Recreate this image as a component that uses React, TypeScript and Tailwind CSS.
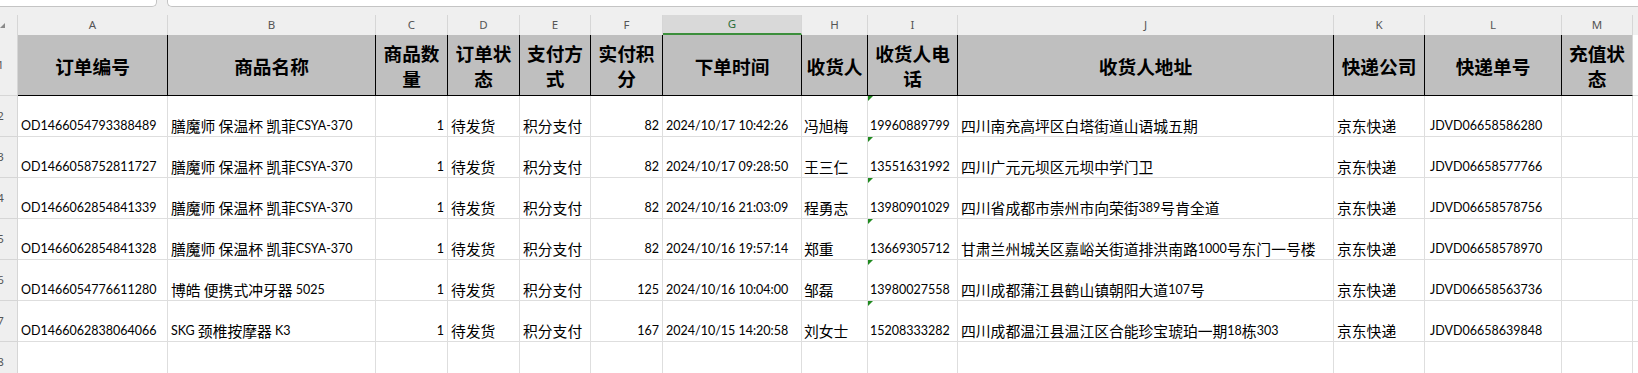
import React from "react";

const GRID =
  "grid grid-cols-[18px_150px_208px_72px_72px_71px_72px_139px_66px_90px_376px_91px_137px_71px_1fr]";

const LETTERS = ["A", "B", "C", "D", "E", "F", "G", "H", "I", "J", "K", "L", "M"];

const HEADERS = [
  "订单编号",
  "商品名称",
  "商品数量",
  "订单状态",
  "支付方式",
  "实付积分",
  "下单时间",
  "收货人",
  "收货人电话",
  "收货人地址",
  "快递公司",
  "快递单号",
  "充值状态",
];

type Row = string[];

const ROWS: Row[] = [
  ["OD1466054793388489", "膳魔师 保温杯 凯菲CSYA-370", "1", "待发货", "积分支付", "82", "2024/10/17 10:42:26", "冯旭梅", "19960889799", "四川南充高坪区白塔街道山语城五期", "京东快递", "JDVD06658586280"],
  ["OD1466058752811727", "膳魔师 保温杯 凯菲CSYA-370", "1", "待发货", "积分支付", "82", "2024/10/17 09:28:50", "王三仁", "13551631992", "四川广元元坝区元坝中学门卫", "京东快递", "JDVD06658577766"],
  ["OD1466062854841339", "膳魔师 保温杯 凯菲CSYA-370", "1", "待发货", "积分支付", "82", "2024/10/16 21:03:09", "程勇志", "13980901029", "四川省成都市崇州市向荣街389号肯全道", "京东快递", "JDVD06658578756"],
  ["OD1466062854841328", "膳魔师 保温杯 凯菲CSYA-370", "1", "待发货", "积分支付", "82", "2024/10/16 19:57:14", "郑重", "13669305712", "甘肃兰州城关区嘉峪关街道排洪南路1000号东门一号楼", "京东快递", "JDVD06658578970"],
  ["OD1466054776611280", "博皓 便携式冲牙器 5025", "1", "待发货", "积分支付", "125", "2024/10/16 10:04:00", "邹磊", "13980027558", "四川成都蒲江县鹤山镇朝阳大道107号", "京东快递", "JDVD06658563736"],
  ["OD1466062838064066", "SKG 颈椎按摩器 K3", "1", "待发货", "积分支付", "167", "2024/10/15 14:20:58", "刘女士", "15208333282", "四川成都温江县温江区合能珍宝琥珀一期18栋303", "京东快递", "JDVD06658639848"],
];

function Mixed({ text }: { text: string }) {
  const parts = text.match(/[\u3000-\u9fff\uff00-\uffef]+|[^\u3000-\u9fff\uff00-\uffef]+/g) || [];
  return (
    <>
      {parts.map((p, i) =>
        /[\u3000-\u9fff\uff00-\uffef]/.test(p) ? (
          <span key={i} className="font-['Noto_Sans_CJK_SC',sans-serif] text-[14.8px] leading-[16px]">
            {p}
          </span>
        ) : (
          <span key={i} className="font-['Lato','Noto_Sans_CJK_SC',sans-serif] text-[12.5px] leading-[16px] whitespace-pre">
            {p}
          </span>
        )
      )}
    </>
  );
}

function RowHead({ n }: { n: string }) {
  return (
    <div className="relative overflow-hidden bg-[#efefef] border-r border-b border-[#d6d6d6] flex items-center">
      <span className="absolute left-[-10px] w-[21px] text-center font-['Noto_Sans',sans-serif] text-[11.5px] text-[#555]">
        {n}
      </span>
    </div>
  );
}

export default function App() {
  return (
    <div className="w-[1638px] h-[373px] overflow-hidden bg-white text-black">
      {/* formula bar remnants */}
      <div className="h-[7px] flex bg-[#efefef] overflow-hidden">
        <div className="w-[157px] h-full bg-white border-b border-r border-[#c4c4c4] rounded-br-[5px]" />
        <div className="w-[10px] h-full" />
        <div className="flex-1 h-full bg-white border-b border-l border-[#c4c4c4] rounded-bl-[5px]" />
      </div>
      <div className="h-[8px] bg-[#efefef]" />

      {/* column letters */}
      <div className={GRID + " h-[20px] bg-[#efefef]"}>
        <div className="relative border-r border-[#d6d6d6]">
          <div className="absolute left-0 top-[8px] w-0 h-0 border-l-[5px] border-l-transparent border-b-[5px] border-b-[#8a8a8a]" />
        </div>
        {LETTERS.map((l) =>
          l === "G" ? (
            <div
              key={l}
              className="flex items-center justify-center bg-[#d9d9d9] border-b-2 border-[#3c8f3c] border-r border-r-[#d6d6d6] font-['Noto_Sans',sans-serif] text-[11.5px] text-[#2d6e3a]"
            >
              {l}
            </div>
          ) : (
            <div
              key={l}
              className="flex items-center justify-center border-r border-[#d6d6d6] font-['Noto_Sans',sans-serif] text-[11.5px] text-[#555]"
            >
              {l}
            </div>
          )
        )}
        <div />
      </div>

      {/* header row */}
      <div className={GRID + " h-[61px]"}>
        <RowHead n="1" />
        {HEADERS.map((h, i) => (
          <div
            key={h}
            className={
              "flex items-center justify-center text-center bg-[#bfbfbf] border-b border-black px-[2px] font-['Noto_Sans_CJK_SC',sans-serif] font-bold text-[18.67px] leading-[25px] text-black " +
              (i === HEADERS.length - 1 ? "border-r border-r-[#d6d6d6]" : "border-r border-r-black")
            }
          >
            {h}
          </div>
        ))}
        <div className="border-b border-[#dedede]" />
      </div>

      {/* data rows */}
      {ROWS.map((r, ri) => (
        <div key={ri} className={GRID + " h-[41px]"}>
          <RowHead n={String(ri + 2)} />
          {r.map((c, ci) => {
            const right = ci === 2 || ci === 5;
            const pad = ci === 11 ? "pl-[5px]" : ci === 7 || ci === 8 ? "pl-[2px]" : "pl-[3px]";
            return (
              <div
                key={ci}
                className={
                  "relative flex items-end overflow-hidden whitespace-nowrap border-r border-b border-[#dedede] pb-[2px] leading-[16px] " +
                  (right ? "justify-end pr-[3px]" : pad)
                }
              >
                {ci === 8 && (
                  <div className="absolute left-0 top-0 w-0 h-0 border-t-[5px] border-t-[#1f8a1f] border-r-[5px] border-r-transparent" />
                )}
                <Mixed text={c} />
              </div>
            );
          })}
          <div className="border-r border-b border-[#dedede]" />
          <div className="border-b border-[#dedede]" />
        </div>
      ))}

      {/* row 8 */}
      <div className={GRID + " h-[41px]"}>
        <RowHead n="8" />
        {LETTERS.map((l) => (
          <div key={l} className="border-r border-b border-[#dedede]" />
        ))}
        <div className="border-b border-[#dedede]" />
      </div>
    </div>
  );
}
